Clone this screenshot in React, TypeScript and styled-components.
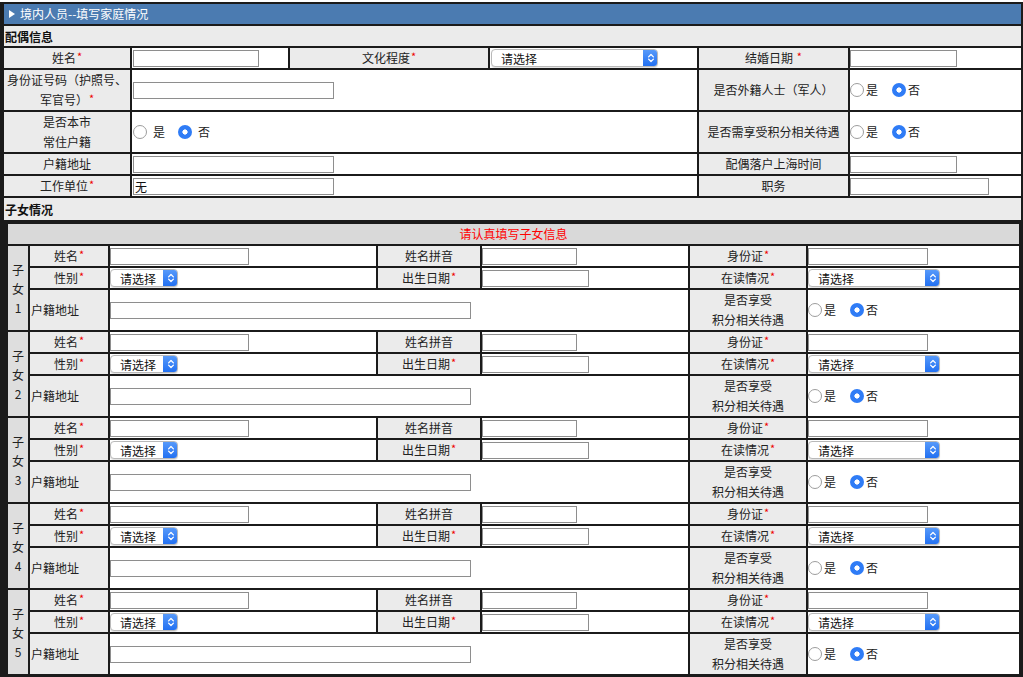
import React from 'react';
import styled, { createGlobalStyle } from 'styled-components';

const GlobalStyle = createGlobalStyle`
  html, body {
    margin: 0;
    padding: 0;
    background: #fff;
  }
  body {
    font-family: "Noto Sans CJK SC", "Liberation Sans", sans-serif;
    font-size: 12px;
    color: #222;
  }
  * {
    box-sizing: border-box;
  }
`;

const Frame = styled.div`
  margin-top: 2px;
  width: 1023px;
  background: #1b1b1b;
  padding: 2px 2px 2px 4px;
  display: flex;
  flex-direction: column;
  gap: 2px;
`;

const TitleBar = styled.div`
  height: 20px;
  background: #4b7bb1;
  color: #fff;
  display: flex;
  align-items: center;
  gap: 5px;
  padding-left: 5px;
  line-height: 20px;
`;

const Triangle = styled.span`
  width: 0;
  height: 0;
  border-left: 6px solid #fff;
  border-top: 4px solid transparent;
  border-bottom: 4px solid transparent;
`;

const SectionBar = styled.div<{ $h: number }>`
  height: ${(p) => p.$h}px;
  background: #ebebeb;
  font-weight: bold;
  display: flex;
  align-items: center;
  padding-left: 1px;
  color: #111;
`;

const SpouseGrid = styled.div`
  display: grid;
  grid-template-columns: 126px 156px 198px 207px 149px 171px;
  grid-template-rows: 20px 40px 40px 20px 20px;
  gap: 2px;
`;

const LabelCell = styled.div<{ $left?: boolean }>`
  background: #ebebeb;
  display: flex;
  align-items: center;
  justify-content: ${(p) => (p.$left ? 'flex-start' : 'center')};
  padding: 0 1px;

  & > span {
    display: block;
    text-align: ${(p) => (p.$left ? 'left' : 'center')};
    line-height: 20px;
    white-space: nowrap;
  }
`;

const Value = styled.div<{ $span?: number; $pl?: number }>`
  background: #fff;
  display: flex;
  align-items: center;
  padding-left: ${(p) => p.$pl ?? 0}px;
  grid-column: ${(p) => (p.$span ? `span ${p.$span}` : 'auto')};
`;

const Req = styled.span`
  color: #ee0000;
  font-size: 11px;
  line-height: 0;
  position: relative;
  top: -2px;
  margin-left: 1px;
`;

const TextInput = styled.input<{ $w: number }>`
  width: ${(p) => p.$w}px;
  height: 17px;
  margin: 0;
  padding: 0 1px;
  border: 1px solid #8e8e8e;
  background: #fff;
  font: inherit;
  font-size: 12px;
  color: #111;
  outline: none;
`;

const SelectBox = styled.div<{ $w: number }>`
  width: ${(p) => p.$w}px;
  height: 18px;
  border: 1px solid #b9b9b9;
  border-radius: 4px;
  background: #fff;
  display: flex;
  align-items: stretch;
  overflow: hidden;
  box-shadow: 0 1px 1px rgba(0, 0, 0, 0.12);
`;

const SelectText = styled.span`
  flex: 1;
  display: flex;
  align-items: center;
  padding: 1px 0 0 9px;
  color: #111;
  line-height: 16px;
`;

const StepBox = styled.span`
  width: 15px;
  margin: -1px -1px -1px 0;
  background: linear-gradient(#5a9cfa, #1f6ef1);
  border-radius: 0 4px 4px 0;
  display: flex;
  align-items: center;
  justify-content: center;
`;

const RadioRow = styled.div<{ $lead: number; $textGap: number; $optGap: number }>`
  display: flex;
  align-items: center;
  padding-left: ${(p) => p.$lead}px;
  gap: ${(p) => p.$optGap}px;

  label {
    display: flex;
    align-items: center;
    gap: ${(p) => p.$textGap}px;
    line-height: 16px;
  }
`;

const Dot = styled.span<{ $on?: boolean }>`
  width: 14px;
  height: 14px;
  border-radius: 50%;
  flex: none;
  ${(p) =>
    p.$on
      ? 'background: radial-gradient(circle, #fff 0 2.3px, #2f7cf6 2.9px);'
      : 'background: #fff; border: 1px solid #9d9d9d;'}
`;

const Nest = styled.div`
  background: #1b1b1b;
  padding: 2px 0 2px 4px;
  display: flex;
  flex-direction: column;
  gap: 2px;
`;

const Notice = styled.div`
  height: 20px;
  background: #d9d9d9;
  color: #f00;
  display: flex;
  align-items: center;
  justify-content: center;
  line-height: 20px;
  margin-right: 2px;
`;

const ChildGrid = styled.div`
  display: grid;
  grid-template-columns: 20px 78px 266px 102px 206px 116px 211px;
  grid-template-rows: 20px 20px 40px;
  gap: 2px;
`;

const SideLabel = styled.div`
  grid-row: span 3;
  background: #dedede;
  display: flex;
  flex-direction: column;
  align-items: center;
  justify-content: center;
  line-height: 19px;
`;

function Label({ children, left }: { children: React.ReactNode; left?: boolean }) {
  return (
    <LabelCell $left={left}>
      <span>{children}</span>
    </LabelCell>
  );
}

function Select({ w }: { w: number }) {
  return (
    <SelectBox $w={w}>
      <SelectText>请选择</SelectText>
      <StepBox>
        <svg width="8" height="12" viewBox="0 0 8 12">
          <path
            d="M1.6 4.9 L4 2.5 L6.4 4.9 M1.6 7.1 L4 9.5 L6.4 7.1"
            fill="none"
            stroke="#fff"
            strokeWidth="1.3"
            strokeLinecap="round"
            strokeLinejoin="round"
          />
        </svg>
      </StepBox>
    </SelectBox>
  );
}

function YesNo({ lead = 0, textGap = 2, optGap = 14 }: { lead?: number; textGap?: number; optGap?: number }) {
  return (
    <RadioRow $lead={lead} $textGap={textGap} $optGap={optGap}>
      <label>
        <Dot />是
      </label>
      <label>
        <Dot $on />否
      </label>
    </RadioRow>
  );
}

function Child({ n }: { n: number }) {
  return (
    <ChildGrid>
      <SideLabel>
        <span>子</span>
        <span>女</span>
        <span>{n}</span>
      </SideLabel>
      <Label>姓名<Req>*</Req></Label>
      <Value><TextInput $w={139} /></Value>
      <Label>姓名拼音</Label>
      <Value><TextInput $w={95} /></Value>
      <Label>身份证<Req>*</Req></Label>
      <Value><TextInput $w={120} /></Value>

      <Label>性别<Req>*</Req></Label>
      <Value><Select w={68} /></Value>
      <Label>出生日期<Req>*</Req></Label>
      <Value><TextInput $w={107} /></Value>
      <Label>在读情况<Req>*</Req></Label>
      <Value><Select w={132} /></Value>

      <Label left>户籍地址</Label>
      <Value $span={3}><TextInput $w={361} /></Value>
      <Label>是否享受<br />积分相关待遇</Label>
      <Value><YesNo /></Value>
    </ChildGrid>
  );
}

export default function App() {
  return (
    <>
      <GlobalStyle />
      <Frame>
        <TitleBar>
          <Triangle />
          <span>境内人员--填写家庭情况</span>
        </TitleBar>
        <SectionBar $h={20}>配偶信息</SectionBar>
        <SpouseGrid>
          <Label>姓名<Req>*</Req></Label>
          <Value $pl={1}><TextInput $w={126} /></Value>
          <Label>文化程度<Req>*</Req></Label>
          <Value $pl={1}><Select w={167} /></Value>
          <Label>结婚日期 <Req>*</Req></Label>
          <Value><TextInput $w={107} /></Value>

          <Label>身份证号码（护照号、<br />军官号）<Req>*</Req></Label>
          <Value $span={3} $pl={1}><TextInput $w={201} /></Value>
          <Label>是否外籍人士（军人）</Label>
          <Value><YesNo /></Value>

          <Label>是否本市<br />常住户籍</Label>
          <Value $span={3}><YesNo lead={1} textGap={6} optGap={13} /></Value>
          <Label>是否需享受积分相关待遇</Label>
          <Value><YesNo /></Value>

          <Label>户籍地址</Label>
          <Value $span={3} $pl={1}><TextInput $w={201} /></Value>
          <Label>配偶落户上海时间</Label>
          <Value><TextInput $w={107} /></Value>

          <Label>工作单位<Req>*</Req></Label>
          <Value $span={3} $pl={1}><TextInput $w={201} defaultValue="无" /></Value>
          <Label>职务</Label>
          <Value><TextInput $w={139} /></Value>
        </SpouseGrid>
        <SectionBar $h={22}>子女情况</SectionBar>
        <Nest>
          <Notice>请认真填写子女信息</Notice>
          {[1, 2, 3, 4, 5].map((n) => (
            <Child key={n} n={n} />
          ))}
        </Nest>
      </Frame>
    </>
  );
}
